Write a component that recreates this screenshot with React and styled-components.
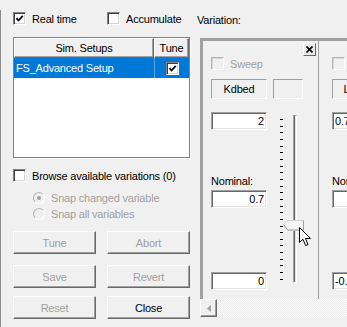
import React from "react";
import styled, { createGlobalStyle } from "styled-components";

const Global = createGlobalStyle`
  html, body { margin: 0; padding: 0; background: #f0f0f0; }
  body {
    font-family: "Liberation Sans", Arial, sans-serif;
    font-size: 11px;
    letter-spacing: -0.2px;
    color: #000;
  }
`;

const Window = styled.div`
  width: 347px;
  height: 327px;
  overflow: hidden;
  display: flex;
  background: #f0f0f0;
`;

const LeftCol = styled.div`
  flex: 0 0 184px;
  margin-top: 10px;
  border-left: 1px solid #8a8a8a;
  padding-left: 12px;
  display: flex;
  flex-direction: column;
`;

const TopRow = styled.div`
  display: flex;
  margin-top: 2px;
`;

const CheckItem = styled.label`
  display: flex;
  align-items: center;
  gap: 6px;
  height: 13px;
  width: ${({ $w }) => ($w ? `${$w}px` : "auto")};
  color: ${({ $disabled }) => ($disabled ? "#a0a0a0" : "#000")};
  white-space: nowrap;
`;

const Box = styled.span`
  box-sizing: border-box;
  flex: 0 0 13px;
  width: 13px;
  height: 13px;
  display: flex;
  align-items: center;
  justify-content: center;
  background: ${({ $disabled }) => ($disabled ? "#f0f0f0" : "#fff")};
  border: 1px solid;
  border-color: ${({ $disabled }) =>
    $disabled ? "#b4b4b4 #fff #fff #b4b4b4" : "#808080 #fff #fff #808080"};
  box-shadow: ${({ $disabled }) =>
    $disabled
      ? "inset 1px 1px #d8d8d8"
      : "inset 1px 1px #404040, inset -1px -1px #d4d4d4"};
`;

const CheckBox = ({ checked, disabled }) => (
  <Box $disabled={disabled}>
    {checked && (
      <svg width="9" height="9" viewBox="0 0 9 9">
        <polyline points="1.5,4.2 3.5,6.5 7.8,1.8" fill="none" stroke="#000" strokeWidth="1.8" />
      </svg>
    )}
  </Box>
);

const ListBox = styled.div`
  box-sizing: border-box;
  margin-top: 12px;
  width: 177px;
  height: 121px;
  background: #fff;
  border: 1px solid #828282;
  box-shadow: 1px 1px #fff;
`;

const Grid = styled.div`
  display: grid;
  grid-template-columns: 140px 1fr;
  height: ${({ $h }) => $h}px;
  background: ${({ $bg }) => $bg || "transparent"};
  color: ${({ $fg }) => $fg || "#000"};
`;

const HeaderCell = styled.div`
  box-sizing: border-box;
  display: flex;
  align-items: center;
  justify-content: center;
  background: #f0f0f0;
  border-top: 1px solid #fff;
  border-left: 1px solid #fff;
  border-right: 1px solid #696969;
  border-bottom: 1px solid #696969;
  box-shadow: inset -1px -1px #a0a0a0;
`;

const RowCell = styled.div`
  display: flex;
  align-items: center;
  justify-content: ${({ $center }) => ($center ? "center" : "flex-start")};
  padding-left: ${({ $center }) => ($center ? 0 : 2)}px;
  border-left: ${({ $center }) => ($center ? "1px solid #5aa5e6" : "none")};
`;

const RadioList = styled.div`
  display: flex;
  flex-direction: column;
  gap: 3px;
  margin: 9px 0 0 20px;
`;

const Radio = styled.span`
  box-sizing: border-box;
  flex: 0 0 12px;
  width: 12px;
  height: 12px;
  border-radius: 50%;
  border: 1px solid #b4b4b4;
  border-right-color: #fff;
  border-bottom-color: #fff;
  background: #f0f0f0;
  display: flex;
  align-items: center;
  justify-content: center;
  &::after {
    content: "";
    width: 4px;
    height: 4px;
    border-radius: 50%;
    background: ${({ $on }) => ($on ? "#a0a0a0" : "transparent")};
  }
`;

const ButtonRow = styled.div`
  display: flex;
  gap: 11px;
  margin-top: ${({ $mt }) => $mt}px;
`;

const Button = styled.div`
  box-sizing: border-box;
  width: 83px;
  height: 23px;
  display: flex;
  align-items: center;
  justify-content: center;
  background: #f0f0f0;
  border-top: 1px solid #fff;
  border-left: 1px solid #fff;
  border-right: 1px solid #696969;
  border-bottom: 1px solid #696969;
  box-shadow: inset -1px -1px #a0a0a0;
  color: ${({ $disabled }) => ($disabled ? "#a0a0a0" : "#000")};
`;

const RightCol = styled.div`
  flex: 1;
  display: flex;
  flex-direction: column;
  padding-top: 14px;
`;

const Label = styled.div`
  line-height: 13px;
  height: 13px;
  white-space: nowrap;
`;

const Frame = styled.div`
  margin: 11px 0 0 3px;
  display: flex;
  flex-direction: column;
  width: 400px;
`;

const PanelsArea = styled.div`
  height: 258px;
  display: flex;
  border-top: 3px solid #a0a0a0;
  border-left: 3px solid #a0a0a0;
`;

const Panel = styled.div`
  flex: 0 0 ${({ $w }) => $w}px;
  border-right: 1px solid #a0a0a0;
  padding-left: ${({ $pad }) => $pad}px;
  display: flex;
  flex-direction: column;
`;

const CloseRow = styled.div`
  display: flex;
  justify-content: flex-end;
  padding-right: 2px;
  margin-top: 2px;
  height: 13px;
`;

const XButton = styled.div`
  box-sizing: border-box;
  width: 13px;
  height: 13px;
  display: flex;
  align-items: center;
  justify-content: center;
  background: #e8e8e8;
  border-top: 1px solid #fff;
  border-left: 1px solid #fff;
  border-right: 1px solid #696969;
  border-bottom: 1px solid #696969;
`;

const NameRow = styled.div`
  display: flex;
  gap: 6px;
  margin-top: 9px;
`;

const Field = styled.div`
  box-sizing: border-box;
  width: ${({ $w }) => $w}px;
  height: ${({ $h }) => $h || 18}px;
  margin-top: ${({ $mt }) => $mt || 0}px;
  display: flex;
  align-items: center;
  justify-content: ${({ $align }) =>
    $align === "center" ? "center" : $align === "left" ? "flex-start" : "flex-end"};
  padding: 0 2px;
  white-space: nowrap;
  overflow: hidden;
  background: ${({ $ro }) => ($ro ? "#f0f0f0" : "#fff")};
  border: 1px solid;
  border-color: #a0a0a0 #fff #fff #a0a0a0;
  box-shadow: ${({ $ro }) => ($ro ? "none" : "inset 1px 1px #696969, inset -1px -1px #e3e3e3")};
`;

const Body = styled.div`
  display: flex;
  margin-top: 13px;
`;

const FieldCol = styled.div`
  display: flex;
  flex-direction: column;
  width: 56px;
`;

const NomLabel = styled(Label)`
  margin-top: 45px;
`;

const SliderArea = styled.div`
  position: relative;
  display: flex;
  width: 40px;
`;

const Ticks = styled.div`
  margin: 7px 0 0 13px;
  height: 161px;
  display: flex;
  flex-direction: column;
  justify-content: space-between;
`;

const Tick = styled.span`
  display: block;
  width: 3px;
  height: 1px;
  background: #000;
`;

const Track = styled.div`
  box-sizing: border-box;
  margin: 3px 0 0 10px;
  width: 4px;
  height: 168px;
  border: 1px solid;
  border-color: #a0a0a0 #fff #fff #a0a0a0;
  background: #696969;
  box-shadow: inset -1px 0 #e3e3e3;
`;

const Thumb = styled.svg`
  position: absolute;
  top: 108px;
  left: 16px;
`;

const Cursor = styled.svg`
  position: absolute;
  top: 115px;
  left: 32px;
`;

const ScrollBar = styled.div`
  height: 18px;
  display: flex;
  background-color: #fbfbfb;
  background-image: repeating-conic-gradient(#ececec 0 25%, #fbfbfb 0 50%);
  background-size: 2px 2px;
`;

const ArrowBtn = styled.div`
  box-sizing: border-box;
  width: 17px;
  height: 18px;
  display: flex;
  align-items: center;
  justify-content: center;
  background: #f0f0f0;
  border-top: 1px solid #fff;
  border-left: 1px solid #fff;
  border-right: 1px solid #696969;
  border-bottom: 1px solid #696969;
  box-shadow: inset -1px -1px #a0a0a0;
`;

const VarPanel = ({ w, pad, name, upper, nominal, lower, align, slider }) => (
  <Panel $w={w} $pad={pad}>
    <CloseRow>
      <XButton>
        <svg width="7" height="7" viewBox="0 0 7 7">
          <path d="M0.5 0.5 L6.5 6.5 M6.5 0.5 L0.5 6.5" stroke="#000" strokeWidth="1.6" />
        </svg>
      </XButton>
    </CloseRow>
    <CheckItem $disabled style={{ marginTop: 1 }}>
      <CheckBox disabled />
      Sweep
    </CheckItem>
    <NameRow>
      <Field $ro $w={56} $h={20} $align="center">{name}</Field>
      <Field $ro $w={30} $h={20} />
    </NameRow>
    <Body>
      <FieldCol>
        <Field $w={56} $align={align}>{upper}</Field>
        <NomLabel>Nominal:</NomLabel>
        <Field $w={56} $mt={2} $align={align}>{nominal}</Field>
        <Field $w={56} $mt={64} $align={align}>{lower}</Field>
      </FieldCol>
      {slider && (
        <SliderArea>
          <Ticks>
            {Array.from({ length: 25 }, (_, i) => (
              <Tick key={i} />
            ))}
          </Ticks>
          <Track />
          <Thumb width="21" height="11" viewBox="0 0 21 11">
            <polygon points="0.5,4.5 5,0.5 20.5,0.5 20.5,10.5 5,10.5" fill="#f4f4f4" stroke="#d6d6d6" />
            <polyline points="0.5,4.5 5,10 20.5,10" fill="none" stroke="#a0a0a0" />
            <line x1="20.5" y1="0.5" x2="20.5" y2="10.5" stroke="#a0a0a0" />
          </Thumb>
          <Cursor width="13" height="20" viewBox="0 0 13 20">
            <path
              d="M0.5 0.5 L0.5 15.5 L4 12.2 L6.6 18.5 L9 17.5 L6.5 11.5 L11.5 11.5 Z"
              fill="#fff"
              stroke="#000"
              strokeWidth="1"
              strokeLinejoin="miter"
            />
          </Cursor>
        </SliderArea>
      )}
    </Body>
  </Panel>
);

export default function App() {
  return (
    <>
      <Global />
      <Window>
        <LeftCol>
          <TopRow>
            <CheckItem $w={94}>
              <CheckBox checked />
              Real time
            </CheckItem>
            <CheckItem>
              <CheckBox />
              Accumulate
            </CheckItem>
          </TopRow>

          <ListBox>
            <Grid $h={20}>
              <HeaderCell>Sim. Setups</HeaderCell>
              <HeaderCell>Tune</HeaderCell>
            </Grid>
            <Grid $h={20} $bg="#0078d7" $fg="#fff">
              <RowCell>FS_Advanced Setup</RowCell>
              <RowCell $center>
                <CheckBox checked />
              </RowCell>
            </Grid>
          </ListBox>

          <CheckItem style={{ marginTop: 11 }}>
            <CheckBox />
            Browse available variations (0)
          </CheckItem>

          <RadioList>
            <CheckItem $disabled>
              <Radio $on />
              Snap changed variable
            </CheckItem>
            <CheckItem $disabled>
              <Radio />
              Snap all variables
            </CheckItem>
          </RadioList>

          <ButtonRow $mt={11}>
            <Button $disabled>Tune</Button>
            <Button $disabled>Abort</Button>
          </ButtonRow>
          <ButtonRow $mt={11}>
            <Button $disabled>Save</Button>
            <Button $disabled>Revert</Button>
          </ButtonRow>
          <ButtonRow $mt={8}>
            <Button $disabled>Reset</Button>
            <Button>Close</Button>
          </ButtonRow>
        </LeftCol>

        <RightCol>
          <Label>Variation:</Label>
          <Frame>
            <PanelsArea>
              <VarPanel w={107} pad={8} name="Kdbed" upper="2" nominal="0.7" lower="0" slider />
              <VarPanel w={107} pad={13} name="Lmotor" upper="0.75" nominal="" lower="-0.25" align="left" />
            </PanelsArea>
            <ScrollBar>
              <ArrowBtn>
                <svg width="4" height="7" viewBox="0 0 4 7">
                  <polygon points="4,0 0,3.5 4,7" fill="#a0a0a0" />
                </svg>
              </ArrowBtn>
            </ScrollBar>
          </Frame>
        </RightCol>
      </Window>
    </>
  );
}
